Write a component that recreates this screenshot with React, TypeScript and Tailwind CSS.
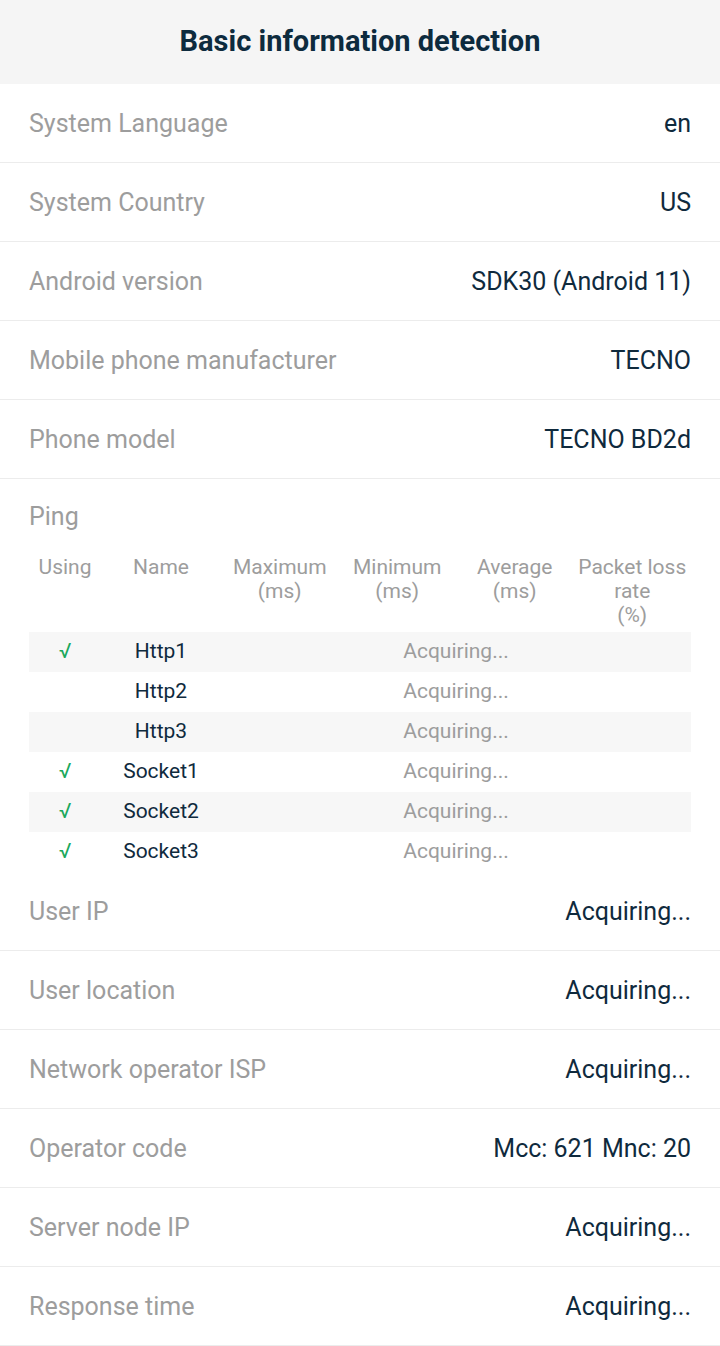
const infoTop = [
  { label: 'System Language', value: 'en' },
  { label: 'System Country', value: 'US' },
  { label: 'Android version', value: 'SDK30 (Android 11)' },
  { label: 'Mobile phone manufacturer', value: 'TECNO' },
  { label: 'Phone model', value: 'TECNO BD2d' },
];

const infoBottom = [
  { label: 'User IP', value: 'Acquiring...' },
  { label: 'User location', value: 'Acquiring...' },
  { label: 'Network operator ISP', value: 'Acquiring...' },
  { label: 'Operator code', value: 'Mcc: 621 Mnc: 20' },
  { label: 'Server node IP', value: 'Acquiring...' },
  { label: 'Response time', value: 'Acquiring...' },
];

const pingRows = [
  { name: 'Http1', using: true },
  { name: 'Http2', using: false },
  { name: 'Http3', using: false },
  { name: 'Socket1', using: true },
  { name: 'Socket2', using: true },
  { name: 'Socket3', using: true },
];

// each header cell is a list of lines, the app breaks them like this
const headers = [
  ['Using'],
  ['Name'],
  ['Maximum', '(ms)'],
  ['Minimum', '(ms)'],
  ['Average', '(ms)'],
  ['Packet loss', 'rate', '(%)'],
];

function InfoRow({ label, value }: { label: string; value: string }) {
  return (
    <div className="flex h-[79px] items-center justify-between border-b border-[#ececec] px-[29px] pt-[2px]">
      <span className="text-[25px] text-[#9d9d9d]">{label}</span>
      <span className="text-[25px] text-[#0f2a3d]">{value}</span>
    </div>
  );
}

export default function App() {
  return (
    <div className="min-h-[1346px] bg-white" style={{ fontFamily: 'Roboto, "Noto Sans", sans-serif' }}>
      <header className="flex h-[84px] items-center justify-center bg-[#f5f5f5]">
        <h1 className="text-[29px] font-bold text-[#0d2b3e]">Basic information detection</h1>
      </header>

      {infoTop.map((row) => (
        <InfoRow key={row.label} {...row} />
      ))}

      <section className="px-[29px]">
        <div className="flex h-[76px] items-center text-[25px] text-[#9d9d9d]">Ping</div>
        <div className="grid grid-cols-[72px_120px_1fr_1fr_1fr_1fr] pb-[5px] text-center text-[21px] leading-[24px] text-[#9d9d9d]">
          {headers.map((lines) => (
            <div key={lines.join(' ')}>
              {lines.map((line) => (
                <div key={line}>{line}</div>
              ))}
            </div>
          ))}
        </div>
        <div>
          {pingRows.map((row, index) => (
            <div
              key={row.name}
              className={`grid h-[40px] grid-cols-[72px_120px_1fr] items-center text-center text-[21px] ${
                index % 2 === 0 ? 'bg-[#f7f7f7]' : 'bg-white'
              }`}
            >
              <span className="text-[#1aa85c]">{row.using ? '√' : ''}</span>
              <span className="text-[#0f2a3d]">{row.name}</span>
              <span className="text-[#9d9d9d]">Acquiring...</span>
            </div>
          ))}
        </div>
      </section>

      {infoBottom.map((row) => (
        <InfoRow key={row.label} {...row} />
      ))}
    </div>
  );
}
